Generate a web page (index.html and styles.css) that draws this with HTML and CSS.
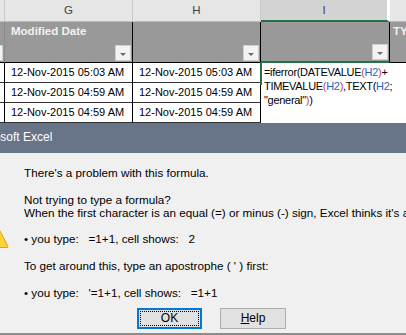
FILE: index.html
```html
<!DOCTYPE html>
<html>
<head>
<meta charset="utf-8">
<link rel="stylesheet" href="styles.css">
</head>
<body>
<div class="sheet">
  <div class="colheads">
    <div class="ch c0"></div>
    <div class="ch">G</div>
    <div class="ch">H</div>
    <div class="ch ch-sel">I</div>
    <div class="ch ch-last"></div>
  </div>
  <div class="theads">
    <div class="th th0"><span class="dd dd0"></span></div>
    <div class="th"><span class="th-label">Modified Date</span><span class="dd"></span></div>
    <div class="th"><span class="th-label"></span><span class="dd"></span></div>
    <div class="th th-i"><span class="th-label"></span><span class="dd"></span></div>
    <div class="th th-last"><span class="th-label">TY</span></div>
  </div>
  <div class="rows">
    <div class="td td0"></div>
    <div class="td">12-Nov-2015 05:03 AM</div>
    <div class="td">12-Nov-2015 05:03 AM</div>
    <div class="td td0"></div>
    <div class="td">12-Nov-2015 04:59 AM</div>
    <div class="td">12-Nov-2015 04:59 AM</div>
    <div class="td td0"></div>
    <div class="td">12-Nov-2015 04:59 AM</div>
    <div class="td">12-Nov-2015 04:59 AM</div>
    <div class="editor">=iferror(DATEVALUE<span class="p">(</span><span class="ref">H2</span><span class="p">)</span>+<br>TIMEVALUE<span class="p">(</span><span class="ref">H2</span><span class="p">)</span>,TEXT(<span class="ref">H2</span>;<br>"general"<span class="p">)</span>)</div>
  </div>
</div>
<div class="dlg">
  <div class="titlebar"><span class="title">Microsoft Excel</span></div>
  <div class="dlg-body">
    <div class="content">
      <div class="icon-col">
        <svg class="warn" width="10" height="20" viewBox="0 0 10 20">
          <polygon points="-2,1 -0.5,1 8,17.5 7.5,18.5 -2,18.5" fill="#fdd23b" stroke="#e3a400" stroke-width="1"/>
        </svg>
      </div>
      <div class="msg">
        <p>There's a problem with this formula.</p>
        <p>Not trying to type a formula?<br>When the first character is an equal (=) or minus (-) sign, Excel thinks it's a</p>
        <p>• you type:   =1+1, cell shows:   2</p>
        <p>To get around this, type an apostrophe ( ' ) first:</p>
        <p>• you type:   '=1+1, cell shows:   =1+1</p>
      </div>
    </div>
    <div class="buttons">
      <div class="btn btn-default"><span class="focus">OK</span></div>
      <div class="btn"><span><u>H</u>elp</span></div>
    </div>
  </div>
</div>
</body>
</html>
```
FILE: styles.css
```css
html, body {
  margin: 0;
  padding: 0;
  width: 406px;
  height: 335px;
  overflow: hidden;
  background: #ffffff;
  font-family: "Liberation Sans", Arial, sans-serif;
}

.sheet {
  height: 123px;
  font-size: 11px;
  color: #000;
}

/* column letters */
.colheads {
  display: grid;
  grid-template-columns: 5px 128px 128px 129px 1fr;
  height: 22px;
  background: #e6e6e6;
}
.ch {
  box-sizing: border-box;
  border-right: 1px solid #c8c8c8;
  border-bottom: 1px solid #bdbdbd;
  text-align: center;
  line-height: 21px;
  color: #444;
  font-size: 11.5px;
}
.ch-sel {
  background: #d3d3d3;
  border-right: 3px solid #ffffff;
  border-bottom: 2px solid #217346;
  line-height: 20px;
}
.ch-last {
  border-right: 0;
}

/* table header */
.theads {
  display: grid;
  grid-template-columns: 5px 128px 128px 129px 1fr;
  height: 41px;
  background: #999999;
}
.th {
  box-sizing: border-box;
  border-right: 1px solid #000;
  border-bottom: 1px solid #000;
  display: flex;
  flex-direction: column;
  padding: 2px 1px 1px 6px;
  min-width: 0;
  overflow: hidden;
}
.th0 {
  padding: 0 1px 1px 0;
  border-right: 1px solid #8a8a8a;
}
.th-i {
  border-bottom: 2px solid #217346;
}
.th-last {
  border-right: 0;
  padding-left: 3px;
}
.th-label {
  color: #f2f2f2;
  font-weight: bold;
  font-size: 11.5px;
  line-height: 14px;
  height: 14px;
  white-space: nowrap;
}
.dd {
  margin-top: auto;
  align-self: flex-end;
  width: 16px;
  height: 16px;
  box-sizing: border-box;
  background: #f3f3f3;
  border: 1px solid #cfcfcf;
  position: relative;
}
.dd::after {
  content: "";
  position: absolute;
  left: 4px;
  top: 7px;
  border-left: 3px solid transparent;
  border-right: 3px solid transparent;
  border-top: 3px solid #6b6b6b;
}
.dd0 {
  width: 4px;
  border-left: 0;
}
.dd0::after { display: none; }

/* data rows */
.rows {
  display: grid;
  grid-template-columns: 5px 128px 128px 1fr;
  grid-template-rows: 20px 20px 20px;
}
.td {
  box-sizing: border-box;
  border-right: 1px solid #000;
  border-bottom: 1px solid #333;
  padding-left: 6px;
  line-height: 19px;
  white-space: nowrap;
  overflow: hidden;
}
.td0 {
  padding: 0;
}
.editor {
  grid-column: 4;
  grid-row: 1 / span 3;
  position: relative;
  background: #fff;
  padding: 2px 0 0 3px;
  font-size: 11px;
  letter-spacing: -0.3px;
  line-height: 14px;
  white-space: nowrap;
  color: #000;
}
.editor::before {
  content: "";
  position: absolute;
  left: -1px;
  top: -1px;
  width: 2px;
  height: 23px;
  background: #217346;
}
.editor .p { color: #c0407a; }
.editor .ref { color: #2f5fb3; }

/* dialog */
.dlg {
  height: 212px;
  font-size: 12px;
  color: #000;
}
.titlebar {
  height: 30px;
  background: #687589;
  color: #ffffff;
  line-height: 29px;
  white-space: nowrap;
  overflow: hidden;
}
.title {
  display: block;
  text-indent: -29px;
  font-size: 12px;
}
.dlg-body {
  box-sizing: border-box;
  height: 182px;
  background: #f0f0f0;
  border-bottom: 2px solid #8c8c8c;
  padding-top: 13px;
}
.content {
  display: flex;
}
.icon-col {
  width: 24px;
  flex: none;
}
.warn {
  display: block;
  margin-top: 63px;
}
.msg {
  white-space: nowrap;
  overflow: hidden;
  line-height: 13.3px;
  font-size: 11.7px;
}
.msg p {
  margin: 0 0 13.3px 0;
  white-space: pre;
}
.msg p:last-child {
  margin-bottom: 0;
}
.buttons {
  display: flex;
  gap: 18px;
  padding-left: 137px;
  margin-top: 9px;
}
.btn {
  box-sizing: border-box;
  width: 66px;
  height: 21px;
  background: #e1e1e1;
  border: 1px solid #adadad;
  display: flex;
  align-items: center;
  justify-content: center;
  font-size: 12px;
}
.btn-default {
  width: 65px;
  border: 2px solid #0078d7;
  padding: 1px;
}
.focus {
  flex: 1;
  align-self: stretch;
  border: 1px dotted #000;
  display: flex;
  align-items: center;
  justify-content: center;
}
```
